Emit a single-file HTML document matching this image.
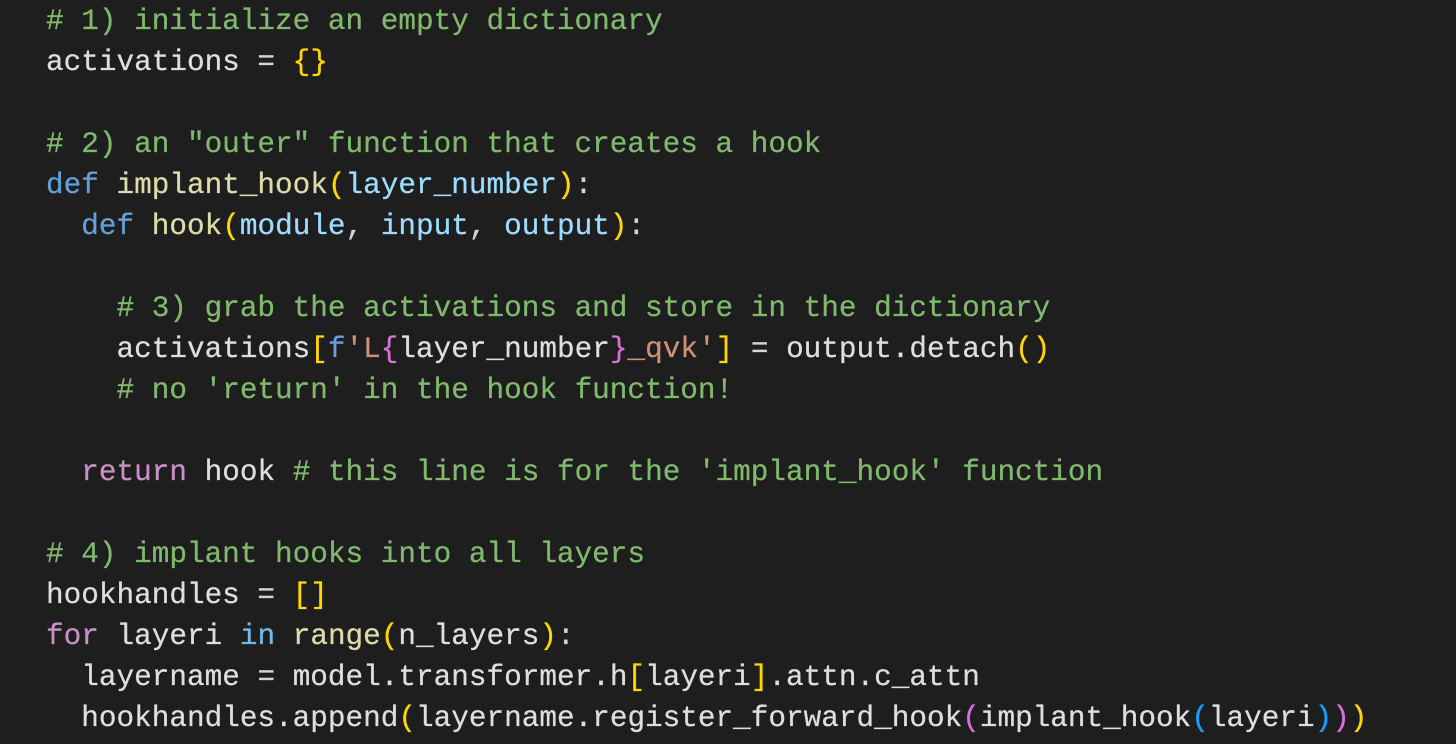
<!DOCTYPE html>
<html>
<head>
<meta charset="utf-8">
<style>
html,body{margin:0;padding:0;background:#1e1e1e;width:1456px;height:744px;overflow:hidden}
pre{position:absolute;left:46px;top:0;margin:0;font-family:"Liberation Mono","DejaVu Sans Mono",monospace;font-size:29.36px;line-height:41px;color:#d4d4d4;white-space:pre;padding-top:1px;-webkit-text-stroke:.25px currentColor}
.c{color:#80b96e}
.k{color:#659fd8}
.i{color:#72b9ea}
.f{color:#dcdcaa}
.v{color:#9cdcfe}
.y{color:#ffd700}
.p{color:#da70d6}
.b{color:#179fff}
.r{color:#c98fc4}
.s{color:#ce9178}
.w{color:#dedede}
</style>
</head>
<body>
<pre><span class="c"># 1) initialize an empty dictionary</span>
<span class="w">activations</span> = <span class="y">{}</span>

<span class="c"># 2) an "outer" function that creates a hook</span>
<span class="k">def</span> <span class="f">implant_hook</span><span class="y">(</span><span class="v">layer_number</span><span class="y">)</span>:
  <span class="k">def</span> <span class="f">hook</span><span class="y">(</span><span class="v">module</span>, <span class="v">input</span>, <span class="v">output</span><span class="y">)</span>:

    <span class="c"># 3) grab the activations and store in the dictionary</span>
    <span class="w">activations</span><span class="y">[</span><span class="k">f</span><span class="s">'L</span><span class="p">{</span><span class="w">layer_number</span><span class="p">}</span><span class="s">_qvk'</span><span class="y">]</span> = <span class="w">output.detach</span><span class="y">()</span>
    <span class="c"># no 'return' in the hook function!</span>

  <span class="r">return</span> <span class="w">hook</span> <span class="c"># this line is for the 'implant_hook' function</span>

<span class="c"># 4) implant hooks into all layers</span>
<span class="w">hookhandles</span> = <span class="y">[]</span>
<span class="r">for</span> <span class="w">layeri</span> <span class="i">in</span> <span class="f">range</span><span class="y">(</span><span class="w">n_layers</span><span class="y">)</span>:
  <span class="w">layername</span> = <span class="w">model.transformer.h</span><span class="y">[</span><span class="w">layeri</span><span class="y">]</span><span class="w">.attn.c_attn</span>
  <span class="w">hookhandles.append</span><span class="y">(</span><span class="w">layername.register_forward_hook</span><span class="p">(</span><span class="w">implant_hook</span><span class="b">(</span><span class="w">layeri</span><span class="b">)</span><span class="p">)</span><span class="y">)</span></pre>
</body>
</html>
